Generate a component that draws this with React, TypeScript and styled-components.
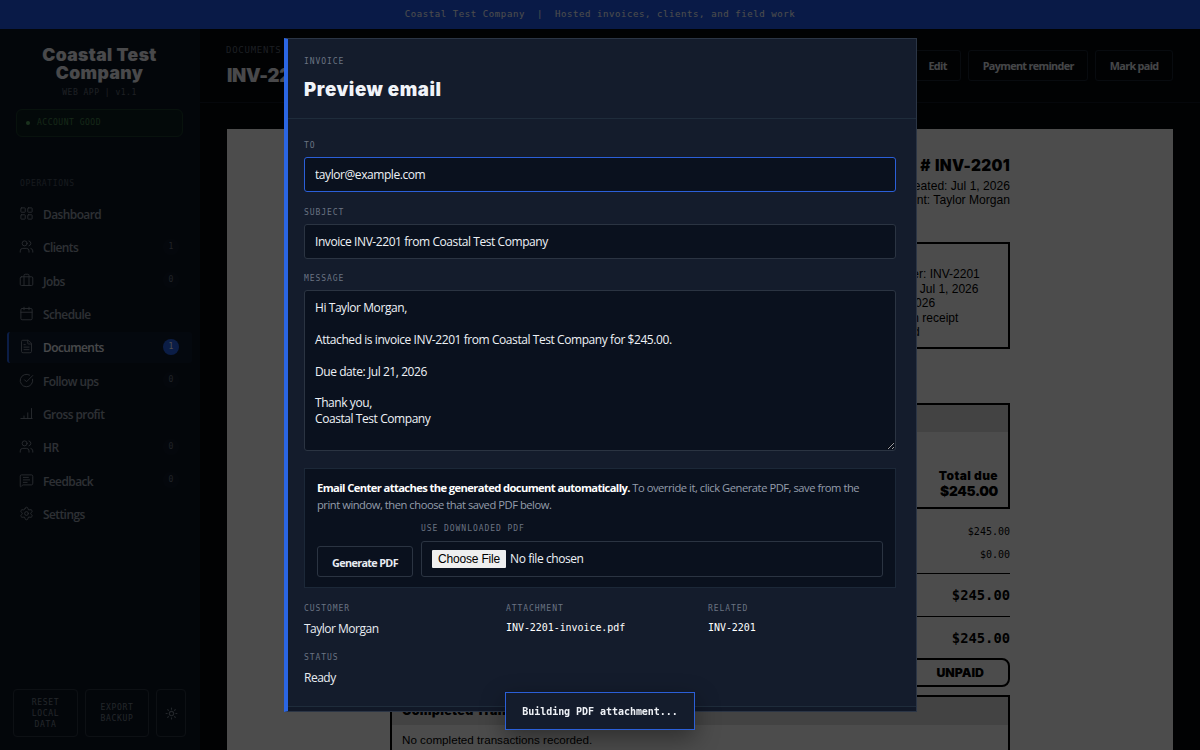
import React from "react";
import styled, { createGlobalStyle, css } from "styled-components";
import {
  LayoutGrid,
  Users,
  Briefcase,
  Calendar,
  FileText,
  CircleCheckBig,
  MessageSquareText,
  Settings,
  Sun,
} from "lucide-react";

const sans = `"Open Sans", "Noto Sans", sans-serif`;
const mono = `"DejaVu Sans Mono", "Liberation Mono", monospace`;
const black = `Inter, "Liberation Sans", sans-serif`;
const arial = `"Liberation Sans", Arial, sans-serif`;
const accent = "#2563eb";

const GlobalStyle = createGlobalStyle`
  *, *::before, *::after { box-sizing: border-box; }
  html, body { margin: 0; height: 100%; overflow: hidden; background: #04070d; }
  body { font-family: ${sans}; color: #e8ecf2; }
  h1, h2, p { margin: 0; }
`;

const Page = styled.div`
  height: 750px;
  width: 1200px;
  display: flex;
  flex-direction: column;
  overflow: hidden;
`;

const Banner = styled.div`
  height: 29px;
  flex: none;
  display: flex;
  align-items: center;
  justify-content: center;
  gap: 12px;
  background: #2059ee;
  color: #fff;
  font: 9px/29px ${mono};
  letter-spacing: 0.59px;
  white-space: pre;
`;

const Shell = styled.div`
  flex: 1;
  min-height: 0;
  display: flex;
`;

const Sidebar = styled.aside`
  width: 200px;
  flex: none;
  display: flex;
  flex-direction: column;
  background: #0c1724;
`;

const Brand = styled.div`
  padding: 17px 17px 0 16px;
  text-align: center;
`;

const BrandName = styled.h1`
  font: 900 17.5px/18.4px ${black};
  letter-spacing: 0.4px;
  color: #f4f6fa;
`;

const BrandMeta = styled.div`
  margin-top: 4px;
  font: 8px/11px ${mono};
  letter-spacing: 0.5px;
  color: #646c7a;
`;

const AccountPill = styled.div`
  margin: 11px 0 0;
  height: 28px;
  border: 1px solid #1c3e2d;
  border-radius: 6px;
  background: #0d211f;
  display: flex;
  align-items: center;
  gap: 7px;
  padding-left: 9px;
  font: 8px/26px ${mono};
  letter-spacing: 0.52px;
  color: #48864f;
`;

const Dot = styled.i`
  width: 4px;
  height: 4px;
  border-radius: 50%;
  background: #57a862;
`;

const NavHeading = styled.div`
  padding: 41px 20px 0;
  font: 8px/11px ${mono};
  letter-spacing: 0.65px;
  color: #4e5766;
`;

const Nav = styled.nav`
  padding: 9.6px 8px 0 7px;
  display: flex;
  flex-direction: column;
  gap: 2px;
`;

const NavItem = styled.a<{ $active?: boolean }>`
  height: 31.35px;
  display: flex;
  align-items: center;
  padding: 0 13px 0 10.2px;
  border-left: 2px solid transparent;
  border-radius: 3px;
  font: 600 11.9px/18px ${sans};
  letter-spacing: -0.54px;
  color: #99a1af;
  svg {
    flex: none;
    margin: -1px 8.8px 0 0;
    color: #858e9c;
  }
  ${(p) =>
    p.$active &&
    css`
      border-left-color: ${accent};
      background: #101c30;
      color: #eef2f8;
    `}
`;

const NavText = styled.span`
  flex: 1;
`;

const Count = styled.span<{ $active?: boolean }>`
  width: 16px;
  height: 16px;
  margin-top: -1px;
  border-radius: 8px;
  text-align: center;
  font: 8px/16px ${mono};
  letter-spacing: 0;
  background: ${(p) => (p.$active ? accent : "#101a29")};
  color: ${(p) => (p.$active ? "#fff" : "#6b7482")};
`;

const SidebarFooter = styled.div`
  margin-top: auto;
  padding: 0 14px 13px 13px;
  display: flex;
  gap: 7px;
`;

const FooterButton = styled.button<{ $w: number }>`
  width: ${(p) => p.$w}px;
  height: 48px;
  padding: 0 8px;
  border: 1px solid #2c3644;
  border-radius: 4px;
  background: transparent;
  color: #76808e;
  display: flex;
  align-items: center;
  justify-content: center;
  font: 8px/11px ${mono};
  letter-spacing: 0.68px;
  svg {
    flex: none;
  }
`;

const Main = styled.main`
  flex: 1;
  min-width: 0;
  display: flex;
  flex-direction: column;
  background: #04070d;
`;

const MainHeader = styled.header`
  height: 74px;
  flex: none;
  padding: 0 27px 0 26px;
  border-bottom: 1px solid #111a26;
  display: flex;
  align-items: center;
  justify-content: space-between;
`;

const Crumb = styled.div`
  font: 9px/12px ${mono};
  letter-spacing: 0.75px;
  color: #5d6674;
`;

const DocTitle = styled.h1`
  margin: 7px 0 1px 1px;
  font: 900 18.5px/24px ${black};
  letter-spacing: -0.3px;
  color: #f4f6fa;
`;

const Actions = styled.div`
  display: flex;
  gap: 7px;
`;

const Button = styled.button`
  height: 31px;
  padding: 0 13.5px;
  border: 1px solid #1b2634;
  border-radius: 3px;
  background: transparent;
  color: #e8ecf2;
  font: 700 10.8px/29px ${sans};
  letter-spacing: -0.65px;
  white-space: nowrap;
`;

const Paper = styled.article`
  flex: 1;
  min-height: 0;
  margin: 26px 27px 0;
  padding: 0 163px;
  background: #fff;
  color: #000;
  font-family: ${arial};
  overflow: hidden;
`;

const DocHead = styled.header`
  padding-top: 27px;
  text-align: right;
  font: 12.1px/14.4px ${arial};
`;

const DocNumber = styled.h2`
  margin-bottom: 3px;
  font: 900 15.4px/20px ${black};
  letter-spacing: 0.3px;
  word-spacing: 1px;
`;

const DetailBox = styled.div`
  width: 183px;
  height: 107px;
  margin: 34px 0 0 auto;
  padding: 9px 12px;
  border: 2px solid #000;
  font: 12px/14.5px ${arial};
  white-space: nowrap;
`;

const TotalBox = styled.div`
  height: 106px;
  margin-top: 54px;
  border: 2px solid #000;
`;

const Band = styled.div<{ $h: number }>`
  height: ${(p) => p.$h}px;
  padding: 0 10px;
  background: #e2e2e2;
  font: 900 12.5px/${(p) => p.$h}px ${black};
  letter-spacing: 0.3px;
`;

const TotalDue = styled.div`
  margin-top: 36px;
  padding-right: 10px;
  text-align: right;
  font: 900 12px/15px ${black};
  letter-spacing: 0.4px;
  strong {
    display: block;
    font-size: 13.7px;
    line-height: 16px;
    font-weight: 900;
    letter-spacing: -0.35px;
  }
`;

const AmountRow = styled.div<{ $strong?: boolean }>`
  height: 23px;
  display: flex;
  align-items: center;
  justify-content: flex-end;
  font: 10px/14px ${mono};
  ${(p) =>
    p.$strong &&
    css`
      height: 43px;
      border-top: 1px solid #000;
      font-weight: 700;
      font-size: 13.8px;
    `}
`;

const Subtotals = styled.div`
  padding: 12px 0 6px;
`;

const Stamp = styled.div`
  width: 200px;
  height: 29px;
  margin: -1px 0 0 auto;
  padding-right: 24px;
  border: 2px solid #000;
  border-radius: 8px;
  text-align: right;
  font: 900 12.3px/25px ${black};
`;

const Transactions = styled.section`
  margin-top: 8px;
  border: 2px solid #000;
  height: 90px;
  p {
    padding: 8px 10px;
    font: 11.65px/14px ${arial};
  }
`;

const Overlay = styled.div`
  position: fixed;
  inset: 0;
  background: rgba(0, 0, 0, 0.7);
`;

const Modal = styled.section`
  position: fixed;
  left: 284px;
  top: 38px;
  width: 633px;
  height: 674px;
  display: flex;
  flex-direction: column;
  border: 1px solid #2b3545;
  border-left: 4px solid #2b66e4;
  background: #141c2c;
`;

const ModalHeader = styled.header`
  height: 80px;
  flex: none;
  padding: 16px 16px 0;
  border-bottom: 1px solid #1f2c3b;
`;

const Label = styled.div`
  font: 8px/14px ${mono};
  letter-spacing: 0.95px;
  color: #6a7382;
`;

const ModalTitle = styled.h2`
  margin-top: 9px;
  font: 900 18.6px/22px ${black};
  letter-spacing: 0.6px;
  color: #f0f3f8;
`;

const ModalBody = styled.div`
  flex: 1;
  min-height: 0;
  padding: 20.3px 20px 0 16px;
`;

const ModalFooter = styled.footer`
  height: 5px;
  flex: none;
  border-top: 1px solid #1f2c3b;
  background: #111827;
`;

const Field = styled.div`
  height: 66.5px;
`;

const fieldBox = css`
  width: 100%;
  margin-top: 4.1px;
  border: 1px solid #2b3442;
  border-radius: 3px;
  background: #0a111e;
  color: #eef1f6;
  padding: 0 10px;
  font: 12px/18px ${sans};
  letter-spacing: -0.43px;
`;

const Input = styled.input<{ $focus?: boolean }>`
  ${fieldBox}
  display: block;
  height: 35px;
  outline: none;
  ${(p) =>
    p.$focus &&
    css`
      border-color: #2b5fd8;
    `}
`;

const TextArea = styled.textarea`
  ${fieldBox}
  display: block;
  height: 161px;
  padding: 9px 10px;
  line-height: 15.85px;
  outline: none;
  resize: vertical;
`;

const AttachBox = styled.div`
  height: 120px;
  margin-top: 17px;
  padding: 11px 12px;
  border: 1px solid #1c2838;
  background: #0a111e;
`;

const AttachNote = styled.p`
  font: 11.2px/16.5px ${sans};
  letter-spacing: -0.47px;
  color: #949dab;
  strong {
    color: #fff;
    font-weight: 700;
    letter-spacing: -0.6px;
  }
`;

const AttachRow = styled.div`
  margin-top: 9px;
  display: flex;
  align-items: flex-end;
  gap: 8px;
`;

const GenerateButton = styled(Button)`
  width: 96px;
  padding: 1px 0 0;
  border-color: #2b3442;
`;

const FileColumn = styled.div`
  flex: 1;
`;

const FileField = styled.div`
  ${fieldBox}
  margin-top: 5px;
  height: 36px;
  display: flex;
  align-items: center;
  gap: 4px;
`;

const ChooseFile = styled.button`
  height: 18px;
  padding: 0 6px;
  border: 0;
  border-radius: 1px;
  background: #efefef;
  color: #000;
  font: 12px/18px ${arial};
  letter-spacing: -0.18px;
`;

const Facts = styled.div`
  margin-top: 14px;
  display: grid;
  grid-template-columns: repeat(3, 1fr);
  column-gap: 14px;
  row-gap: 13px;
`;

const Value = styled.div<{ $mono?: boolean }>`
  margin-top: 4px;
  font: 12px/18px ${sans};
  letter-spacing: -0.5px;
  color: #e8ecf2;
  ${(p) =>
    p.$mono &&
    css`
      margin-top: 5px;
      font: 10px/13px ${mono};
      letter-spacing: -0.06px;
      color: #fff;
    `}
`;

const Toast = styled.div`
  position: fixed;
  left: 505px;
  top: 692px;
  width: 190px;
  height: 38px;
  border: 1px solid #2b5fd8;
  background: #141c2c;
  color: #eef1f6;
  text-align: center;
  font: 700 10px/38px ${mono};
  letter-spacing: -0.04px;
  box-shadow: 0 8px 24px rgba(0, 0, 0, 0.4);
`;

const BarsIcon = ({ size = 14 }: { size?: number }) => (
  <svg width={size} height={size} viewBox="0 0 24 24" fill="none" stroke="currentColor" strokeWidth="1.5" strokeLinecap="round">
    <path d="M3 20h18M8 20v-4M14 20v-9M20 20V4" />
  </svg>
);

const items = [
  { name: "Dashboard", Icon: LayoutGrid },
  { name: "Clients", Icon: Users, count: 1 },
  { name: "Jobs", Icon: Briefcase, count: 0 },
  { name: "Schedule", Icon: Calendar },
  { name: "Documents", Icon: FileText, count: 1, active: true },
  { name: "Follow ups", Icon: CircleCheckBig, count: 0 },
  { name: "Gross profit", Icon: BarsIcon },
  { name: "HR", Icon: Users, count: 0 },
  { name: "Feedback", Icon: MessageSquareText, count: 0 },
  { name: "Settings", Icon: Settings },
];

const message = `Hi Taylor Morgan,

Attached is invoice INV-2201 from Coastal Test Company for $245.00.

Due date: Jul 21, 2026

Thank you,
Coastal Test Company`;

export default function App() {
  return (
    <>
      <GlobalStyle />
      <Page>
        <Banner>
          <span>Coastal Test Company</span>
          <span>|</span>
          <span>Hosted invoices, clients, and field work</span>
        </Banner>
        <Shell>
          <Sidebar>
            <Brand>
              <BrandName>Coastal Test Company</BrandName>
              <BrandMeta>WEB APP | v1.1</BrandMeta>
              <AccountPill>
                <Dot />
                ACCOUNT GOOD
              </AccountPill>
            </Brand>
            <NavHeading>OPERATIONS</NavHeading>
            <Nav>
              {items.map(({ name, Icon, count, active }) => (
                <NavItem key={name} $active={active}>
                  <Icon size={15} strokeWidth={1.5} />
                  <NavText>{name}</NavText>
                  {count !== undefined && <Count $active={active}>{count}</Count>}
                </NavItem>
              ))}
            </Nav>
            <SidebarFooter>
              <FooterButton $w={65}>RESET LOCAL DATA</FooterButton>
              <FooterButton $w={64}>EXPORT BACKUP</FooterButton>
              <FooterButton $w={30}>
                <Sun size={13} strokeWidth={2} />
              </FooterButton>
            </SidebarFooter>
          </Sidebar>
          <Main>
            <MainHeader>
              <div>
                <Crumb>DOCUMENTS</Crumb>
                <DocTitle>INV-2201</DocTitle>
              </div>
              <Actions>
                <Button>Edit</Button>
                <Button>Payment reminder</Button>
                <Button>Mark paid</Button>
              </Actions>
            </MainHeader>
            <Paper>
              <DocHead>
                <DocNumber>Invoice # INV-2201</DocNumber>
                <div>Created: Jul 1, 2026</div>
                <div>Client: Taylor Morgan</div>
              </DocHead>
              <DetailBox>
                <b>Details</b>
                <div>Invoice number: INV-2201</div>
                <div>Creation date: Jul 1, 2026</div>
                <div>Due: Jul 21, 2026</div>
                <div>Terms: Due on receipt</div>
                <div>Status: Unpaid</div>
              </DetailBox>
              <TotalBox>
                <Band $h={27}>Description</Band>
                <TotalDue>
                  Total due
                  <strong>$245.00</strong>
                </TotalDue>
              </TotalBox>
              <Subtotals>
                <AmountRow>$245.00</AmountRow>
                <AmountRow>$0.00</AmountRow>
              </Subtotals>
              <AmountRow $strong>$245.00</AmountRow>
              <AmountRow $strong>$245.00</AmountRow>
              <Stamp>UNPAID</Stamp>
              <Transactions>
                <Band $h={28}>Completed Transactions</Band>
                <p>No completed transactions recorded.</p>
              </Transactions>
            </Paper>
          </Main>
        </Shell>
      </Page>
      <Overlay />
      <Modal>
        <ModalHeader>
          <Label>INVOICE</Label>
          <ModalTitle>Preview email</ModalTitle>
        </ModalHeader>
        <ModalBody>
          <Field>
            <Label>TO</Label>
            <Input $focus defaultValue="taylor@example.com" />
          </Field>
          <Field>
            <Label>SUBJECT</Label>
            <Input defaultValue="Invoice INV-2201 from Coastal Test Company" />
          </Field>
          <Label>MESSAGE</Label>
          <TextArea defaultValue={message} />
          <AttachBox>
            <AttachNote>
              <strong>Email Center attaches the generated document automatically.</strong> To override it, click
              Generate PDF, save from the print window, then choose that saved PDF below.
            </AttachNote>
            <AttachRow>
              <GenerateButton>Generate PDF</GenerateButton>
              <FileColumn>
                <Label>USE DOWNLOADED PDF</Label>
                <FileField>
                  <ChooseFile>Choose File</ChooseFile>
                  <span>No file chosen</span>
                </FileField>
              </FileColumn>
            </AttachRow>
          </AttachBox>
          <Facts>
            <div>
              <Label>CUSTOMER</Label>
              <Value>Taylor Morgan</Value>
            </div>
            <div>
              <Label>ATTACHMENT</Label>
              <Value $mono>INV-2201-invoice.pdf</Value>
            </div>
            <div>
              <Label>RELATED</Label>
              <Value $mono>INV-2201</Value>
            </div>
            <div>
              <Label>STATUS</Label>
              <Value>Ready</Value>
            </div>
          </Facts>
        </ModalBody>
        <ModalFooter />
      </Modal>
      <Toast>Building PDF attachment...</Toast>
    </>
  );
}
